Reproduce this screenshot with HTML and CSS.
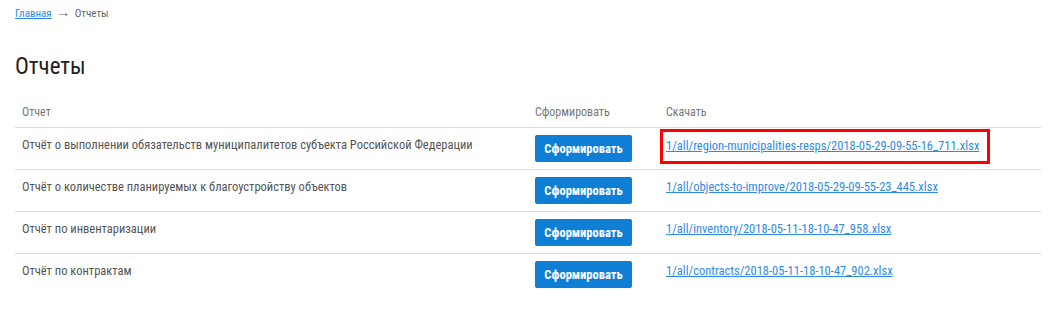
FILE: index.html
```html
<!DOCTYPE html>
<html lang="ru">
<head>
    <meta charset="UTF-8">
    <meta name="viewport" content="width=device-width, initial-scale=1.0">
    <title>Отчеты</title>
    <link rel="stylesheet" href="styles.css">
</head>
<body>
    <div class="page">
        <div class="breadcrumbs">
            <a href="#">Главная</a>
            <span class="arrow">&rarr;</span>
            <span class="current">Отчеты</span>
        </div>

        <h1>Отчеты</h1>

        <table class="reports">
            <thead>
                <tr>
                    <th class="col-name">Отчет</th>
                    <th class="col-build">Сформировать</th>
                    <th class="col-file">Скачать</th>
                </tr>
            </thead>
            <tbody>
                <tr>
                    <td>Отчёт о выполнении обязательств муниципалитетов субъекта Российской Федерации</td>
                    <td><button class="btn">Сформировать</button></td>
                    <td><span class="highlight"><a href="#" class="file-link">1/all/region-municipalities-resps/2018-05-29-09-55-16_711.xlsx</a></span></td>
                </tr>
                <tr>
                    <td>Отчёт о количестве планируемых к благоустройству объектов</td>
                    <td><button class="btn">Сформировать</button></td>
                    <td><a href="#" class="file-link">1/all/objects-to-improve/2018-05-29-09-55-23_445.xlsx</a></td>
                </tr>
                <tr>
                    <td>Отчёт по инвентаризации</td>
                    <td><button class="btn">Сформировать</button></td>
                    <td><a href="#" class="file-link">1/all/inventory/2018-05-11-18-10-47_958.xlsx</a></td>
                </tr>
                <tr>
                    <td>Отчёт по контрактам</td>
                    <td><button class="btn">Сформировать</button></td>
                    <td><a href="#" class="file-link">1/all/contracts/2018-05-11-18-10-47_902.xlsx</a></td>
                </tr>
            </tbody>
        </table>
    </div>
</body>
</html>
```

FILE: styles.css
```css
:root {
    --link-color: #2f8ae3;
    --btn-color: #0f7fd6;
    --text-dark: #222222;
    --text-gray: #666666;
    --line-color: #dddddd;
}

* {
    margin: 0;
    padding: 0;
    box-sizing: border-box;
}

body {
    font-family: "Roboto Condensed", "Liberation Sans Narrow", "Arial Narrow", Roboto, sans-serif;
    font-stretch: condensed;
    background-color: #ffffff;
    color: var(--text-dark);
}

.page {
    padding: 5px 15px 0 15px;
}

.breadcrumbs {
    font-size: 11px;
    line-height: 14px;
    color: var(--text-gray);
}

.breadcrumbs a {
    color: var(--link-color);
}

.breadcrumbs .arrow {
    font-size: 14px;
    margin: 0 2px;
}

h1 {
    font-size: 23px;
    font-weight: normal;
    line-height: 30px;
    margin-top: 31px;
    margin-bottom: 17px;
}

.reports {
    width: 1026px;
    border-collapse: collapse;
}

.reports th {
    font-weight: normal;
    text-align: left;
    font-size: 12px;
    color: #777777;
    padding: 4px 7px 6px 7px;
    line-height: 18px;
    border-bottom: 1px solid var(--line-color);
}

.col-name {
    width: 513px;
}

.col-build {
    width: 131px;
}

.reports td {
    font-size: 12.5px;
    color: #555555;
    padding: 7px;
    line-height: 20px;
    vertical-align: top;
    border-bottom: 1px solid var(--line-color);
}

.reports tbody tr:last-child td {
    border-bottom: none;
}

.btn {
    display: block;
    width: 97px;
    height: 27px;
    background-color: var(--btn-color);
    color: #ffffff;
    border: none;
    border-radius: 2px;
    font-family: inherit;
    font-stretch: condensed;
    font-size: 12.5px;
    font-weight: bold;
    cursor: pointer;
}

.file-link {
    color: var(--link-color);
    font-size: 12.5px;
}

.highlight {
    display: inline-block;
    border: 3px solid #ff0000;
    padding: 4px 8px 5px 3px;
    margin: -6px 0 -6px -6px;
}
```
